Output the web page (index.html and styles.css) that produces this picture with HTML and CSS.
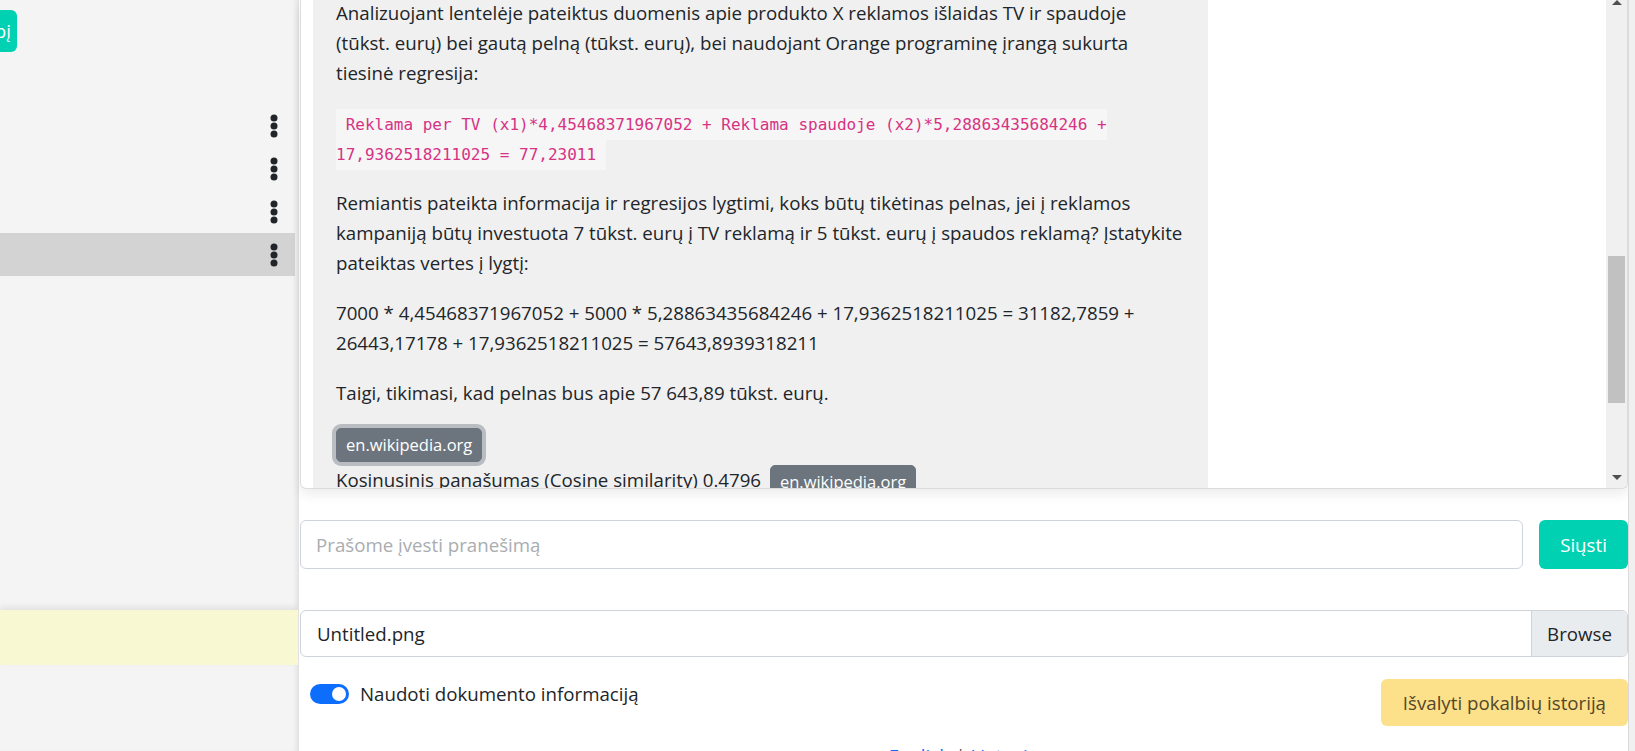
FILE: index.html
```html
<!DOCTYPE html>
<html lang="lt">
<head>
<meta charset="utf-8">
<title>Pokalbis</title>
<link rel="stylesheet" href="styles.css">
</head>
<body>
<div class="app">
  <aside class="sidebar">
    <div class="new-row">
      <button class="btn-new">Pradėti naują pokalbį</button>
    </div>
    <ul class="conv-list">
      <li class="conv"><span class="conv-title"></span><svg class="dots" width="8" height="24" viewBox="0 0 8 24"><circle cx="4" cy="4" r="3.5"/><circle cx="4" cy="12" r="3.5"/><circle cx="4" cy="20" r="3.5"/></svg></li>
      <li class="conv"><span class="conv-title"></span><svg class="dots" width="8" height="24" viewBox="0 0 8 24"><circle cx="4" cy="4" r="3.5"/><circle cx="4" cy="12" r="3.5"/><circle cx="4" cy="20" r="3.5"/></svg></li>
      <li class="conv"><span class="conv-title"></span><svg class="dots" width="8" height="24" viewBox="0 0 8 24"><circle cx="4" cy="4" r="3.5"/><circle cx="4" cy="12" r="3.5"/><circle cx="4" cy="20" r="3.5"/></svg></li>
      <li class="conv active"><span class="conv-title"></span><svg class="dots" width="8" height="24" viewBox="0 0 8 24"><circle cx="4" cy="4" r="3.5"/><circle cx="4" cy="12" r="3.5"/><circle cx="4" cy="20" r="3.5"/></svg></li>
    </ul>
    <div class="notice"></div>
  </aside>

  <main class="main">
    <section class="chat-card">
      <div class="chat-scroll">
        <div class="msg-list">
          <div class="bubble">
            <p>Analizuojant lentelėje pateiktus duomenis apie produkto X reklamos išlaidas TV ir spaudoje<br>(tūkst. eurų) bei gautą pelną (tūkst. eurų), bei naudojant Orange programinę įrangą sukurta<br>tiesinė regresija:</p>
            <p><code>&nbsp;Reklama per TV (x1)*4,45468371967052 + Reklama spaudoje (x2)*5,28863435684246 +<br>17,9362518211025 = 77,23011&nbsp;</code></p>
            <p>Remiantis pateikta informacija ir regresijos lygtimi, koks būtų tikėtinas pelnas, jei į reklamos<br>kampaniją būtų investuota 7 tūkst. eurų į TV reklamą ir 5 tūkst. eurų į spaudos reklamą? Įstatykite<br>pateiktas vertes į lygtį:</p>
            <p>7000 * 4,45468371967052 + 5000 * 5,28863435684246 + 17,9362518211025 = 31182,7859 +<br>26443,17178 + 17,9362518211025 = 57643,8939318211</p>
            <p>Taigi, tikimasi, kad pelnas bus apie 57 643,89 tūkst. eurų.</p>
            <div class="src-row"><button class="btn-src focus">en.wikipedia.org</button></div>
            <div class="sim-row">Kosinusinis panašumas (Cosine similarity) 0.4796 <button class="btn-src">en.wikipedia.org</button></div>
          </div>
        </div>
      </div>
      <div class="vscroll">
        <span class="arrow up"></span>
        <div class="track"><div class="thumb"></div></div>
        <span class="arrow down"></span>
      </div>
    </section>

    <div class="send-row">
      <input class="msg-input" type="text" placeholder="Prašome įvesti pranešimą">
      <button class="btn-send">Siųsti</button>
    </div>

    <div class="file-row">
      <span class="file-name">Untitled.png</span>
      <span class="file-browse">Browse</span>
    </div>

    <div class="opts-row">
      <label class="switch-label"><span class="switch"><span class="knob"></span></span>Naudoti dokumento informaciją</label>
      <button class="btn-clear">Išvalyti pokalbių istoriją</button>
    </div>

    <div class="lang-row"><a href="#">English</a> | <a href="#">Lietuvių</a></div>
  </main>

  <div class="page-strip"></div>
</div>
</body>
</html>
```

FILE: styles.css
```css
* { box-sizing: border-box; }

html, body {
  margin: 0;
  height: 100%;
  overflow: hidden;
  background: #fff;
}

body {
  font-family: "Open Sans", "Noto Sans", sans-serif;
  font-size: 18.7px;
  line-height: 30px;
  color: #212529;
}

.app {
  display: flex;
  height: 751px;
}

/* ---------- sidebar ---------- */
.sidebar {
  width: 299px;
  flex: none;
  background: #f4f4f4;
  display: flex;
  flex-direction: column;
  overflow: hidden;
  box-shadow: inset -5px 0 5px -3px rgba(0, 0, 0, 0.07);
  border-right: 1px solid #e2e2e2;
}

.sidebar > * { flex: none; }

.new-row {
  height: 52px;
  padding-top: 10px;
  display: flex;
  justify-content: flex-end;
  width: 17px;
}

.btn-new {
  flex: none;
  height: 42px;
  padding: 0 6px 0 11px;
  border: 0;
  border-radius: 6px;
  background: #00d1b2;
  color: #fff;
  font: inherit;
  white-space: nowrap;
}

.conv-list {
  list-style: none;
  margin: 52px 0 0;
  padding: 0;
  width: 295px;
}

.conv {
  height: 43px;
  display: flex;
  align-items: center;
  justify-content: space-between;
  padding-right: 17px;
}

.conv.active { background: #d3d3d3; }

.dots { fill: #212529; }

.notice {
  margin-top: auto;
  margin-bottom: 86px;
  height: 55px;
  background: #f8f9d2;
  box-shadow: 0 -3px 6px rgba(0, 0, 0, 0.08);
}

/* ---------- main ---------- */
.main {
  flex: 1;
  display: flex;
  flex-direction: column;
  padding-left: 1px;
  min-width: 0;
}

.main > * { flex: none; }

.chat-card {
  height: 489px;
  display: flex;
  border: 1px solid #dcdcdc;
  border-top: 0;
  border-radius: 0 0 6px 6px;
  box-shadow: 0 6px 12px rgba(0, 0, 0, 0.07);
  overflow: hidden;
  background: #fff;
}

.chat-scroll {
  flex: 1;
  overflow: hidden;
  padding-left: 12px;
}

.msg-list { margin-top: -2px; }

.bubble {
  width: 895px;
  background: #f0f0f0;
  padding: 0 18px 20px 23px;
}

.bubble p {
  margin: 0 0 20px;
  white-space: nowrap;
}

.bubble code {
  font-family: "DejaVu Sans Mono", "Liberation Mono", monospace;
  font-size: 16px;
  line-height: 16px;
  color: #d63384;
  background: #f6f6f6;
  padding: 6px 0;
  -webkit-box-decoration-break: clone;
  box-decoration-break: clone;
}

.src-row { height: 37px; display: flex; align-items: flex-start; }

.btn-src {
  font: inherit;
  font-size: 16.5px;
  line-height: 22px;
  padding: 5px 9px;
  border: 1px solid #6c757d;
  border-radius: 5px;
  background: #6c757d;
  color: #fff;
  white-space: nowrap;
}

.btn-src.focus { box-shadow: 0 0 0 4px rgba(130, 138, 145, 0.5); }

.sim-row { white-space: nowrap; }

.sim-row .btn-src { vertical-align: top; margin-left: 4px; }

/* custom scrollbar */
.vscroll {
  width: 21px;
  flex: none;
  background: #f0f0f0;
  display: flex;
  flex-direction: column;
  align-items: center;
}

.arrow {
  width: 0;
  height: 0;
  border-left: 5px solid transparent;
  border-right: 5px solid transparent;
  flex: none;
}

.arrow.up { border-bottom: 5px solid #505050; }
.arrow.down { border-top: 5px solid #505050; margin-bottom: 8px; }

.track {
  flex: 1;
  width: 100%;
  padding: 251px 2px 0;
}

.thumb {
  height: 147px;
  background: #c1c1c1;
}

/* inputs */
.send-row {
  margin-top: 31px;
  display: flex;
  gap: 16px;
  height: 49px;
}

.msg-input {
  flex: 1;
  height: 49px;
  border: 1px solid #ced4da;
  border-radius: 6px;
  padding: 0 15px;
  font: inherit;
  color: #212529;
  outline: none;
}

.msg-input::placeholder { color: #a9adb1; }

.btn-send {
  width: 89px;
  height: 49px;
  border: 0;
  border-radius: 6px;
  background: #00d1b2;
  color: #fff;
  font: inherit;
}

.file-row {
  margin-top: 41px;
  height: 47px;
  display: flex;
  border: 1px solid #ced4da;
  border-radius: 6px;
  overflow: hidden;
}

.file-name {
  flex: 1;
  padding-left: 16px;
  display: flex;
  align-items: center;
}

.file-browse {
  width: 96px;
  background: #e9ecef;
  border-left: 1px solid #ced4da;
  display: flex;
  align-items: center;
  justify-content: center;
}

.opts-row {
  margin-top: 22px;
  display: flex;
  justify-content: space-between;
  align-items: flex-start;
}

.switch-label {
  display: flex;
  align-items: center;
  gap: 11px;
  margin-left: 10px;
  height: 30px;
}

.switch {
  width: 39px;
  height: 20px;
  border-radius: 10px;
  background: #0d6efd;
  display: flex;
  align-items: center;
  justify-content: flex-end;
  padding-right: 3px;
}

.knob {
  width: 14px;
  height: 14px;
  border-radius: 50%;
  background: #fff;
}

.btn-clear {
  height: 47px;
  padding: 0 22px;
  border: 0;
  border-radius: 6px;
  background: #fde08a;
  color: #524829;
  font: inherit;
}

.lang-row {
  margin-top: 15px;
  text-align: center;
  color: #555;
}

.lang-row a { color: #0d6efd; text-decoration: none; }

.page-strip {
  width: 7px;
  flex: none;
  background: #f0f0f0;
  border-left: 1px solid #dadada;
}
```
